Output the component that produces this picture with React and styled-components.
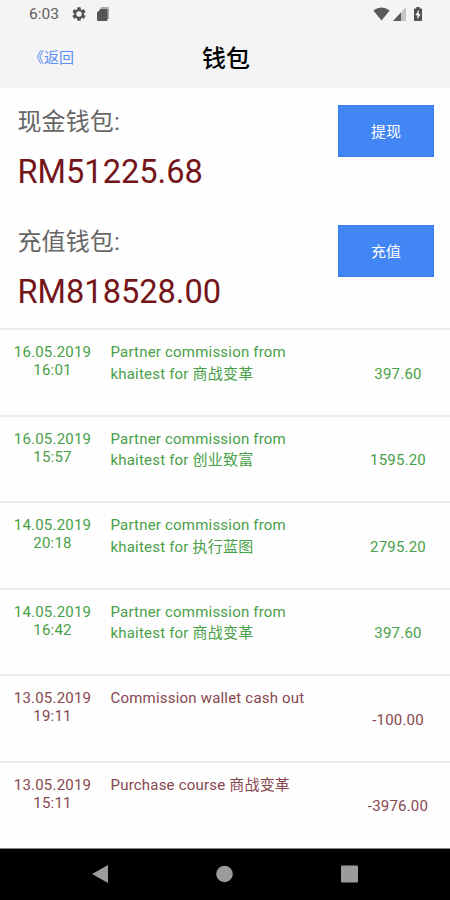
import styled, { createGlobalStyle } from "styled-components";


const wallets = [
    { label: "现金钱包:", balance: "RM51225.68", action: "提现" },
    { label: "充值钱包:", balance: "RM818528.00", action: "充值" },
];

const transactions = [
    { date: "16.05.2019", time: "16:01", text: "Partner commission from khaitest for 商战变革", amount: "397.60" },
    { date: "16.05.2019", time: "15:57", text: "Partner commission from khaitest for 创业致富", amount: "1595.20" },
    { date: "14.05.2019", time: "20:18", text: "Partner commission from khaitest for 执行蓝图", amount: "2795.20" },
    { date: "14.05.2019", time: "16:42", text: "Partner commission from khaitest for 商战变革", amount: "397.60" },
    { date: "13.05.2019", time: "19:11", text: "Commission wallet cash out", amount: "-100.00" },
    { date: "13.05.2019", time: "15:11", text: "Purchase course 商战变革", amount: "-3976.00" },
];

function StatusBar() {
    return (
        <StatusRow>
            <Clock>6:03</Clock>
            <GearIcon width="16" height="16" viewBox="0 0 24 24">
                <path
                    fill="#555"
                    fillRule="evenodd"
                    d="M19.43 12.98c.04-.32.07-.64.07-.98s-.03-.66-.07-.98l2.11-1.65c.19-.15.24-.42.12-.64l-2-3.46c-.12-.22-.39-.3-.61-.22l-2.49 1c-.52-.4-1.08-.73-1.69-.98l-.38-2.65A.488.488 0 0 0 14 2h-4c-.25 0-.46.18-.49.42l-.38 2.65c-.61.25-1.17.59-1.69.98l-2.49-1c-.23-.09-.49 0-.61.22l-2 3.46c-.13.22-.07.49.12.64l2.11 1.65c-.04.32-.07.65-.07.98s.03.66.07.98l-2.11 1.65c-.19.15-.24.42-.12.64l2 3.46c.12.22.39.3.61.22l2.49-1c.52.4 1.08.73 1.69.98l.38 2.65c.03.24.24.42.49.42h4c.25 0 .46-.18.49-.42l.38-2.65c.61-.25 1.17-.59 1.69-.98l2.49 1c.23.09.49 0 .61-.22l2-3.46c.12-.22.07-.49-.12-.64zM12 16a4 4 0 1 1 0-8 4 4 0 0 1 0 8z"
                />
            </GearIcon>
            <CardIcon width="12" height="14" viewBox="0 0 12 14">
                <path d="M4 0h7q1 0 1 1v11h-2V2H3z" fill="#aaa" />
                <path d="M3.6 2H9.5q1 0 1 1v10q0 1-1 1H1q-1 0-1-1V5.6z" fill="#555" />
            </CardIcon>
            <StatusIcons>
                <svg width="17" height="14" viewBox="0 0 17 14">
                    <path d="M0.3 3.6Q8.5-2.8 16.7 3.6L8.5 13.6z" fill="#5b5b5b" />
                </svg>
                <svg width="13" height="14" viewBox="0 0 13 14">
                    <path d="M13 0v14H0z" fill="#c4c4c4" />
                    <path d="M8 5.4V14H0z" fill="#5b5b5b" />
                </svg>
                <BatteryIcon width="8" height="14" viewBox="0 0 8 14">
                    <path d="M2.3 0h3.4v1.4H7q1 0 1 1V13q0 1-1 1H1q-1 0-1-1V2.4q0-1 1-1h1.3z" fill="#505050" />
                    <path d="M4.8 2.8L1.4 8.2h2V12.4L6.7 6.9H4.8z" fill="#f4f4f4" />
                </BatteryIcon>
            </StatusIcons>
        </StatusRow>
    );
}

export default function App() {
    return (
        <Screen>
            <GlobalStyle />

            <Header>
                <StatusBar />
                <TitleBar>
                    <BackLink>《返回</BackLink>
                    <Title>钱包</Title>
                </TitleBar>
            </Header>

            <Wallets>
                {wallets.map((wallet) => (
                    <Wallet key={wallet.label}>
                        <div>
                            <WalletLabel>{wallet.label}</WalletLabel>
                            <Balance>{wallet.balance}</Balance>
                        </div>
                        <ActionButton>{wallet.action}</ActionButton>
                    </Wallet>
                ))}
            </Wallets>

            <TransactionList>
                {transactions.map((item) => (
                    <Transaction key={item.date + item.time} $negative={item.amount.startsWith("-")}>
                        <When>
                            {item.date}
                            <br />
                            {item.time}
                        </When>
                        <Description>{item.text}</Description>
                        <Amount>{item.amount}</Amount>
                    </Transaction>
                ))}
            </TransactionList>

            <NavBar>
                <svg width="16" height="18" viewBox="0 0 16 18">
                    <path d="M16 0v18L0 9z" />
                </svg>
                <svg width="17" height="18" viewBox="0 0 17 18">
                    <circle cx="8.5" cy="9" r="8.3" />
                </svg>
                <svg width="17" height="18" viewBox="0 0 17 18">
                    <rect y="0.5" width="17" height="17" rx="1" />
                </svg>
            </NavBar>
        </Screen>
    );
};

const GlobalStyle = createGlobalStyle`
    body {
        margin: 0;
        background-color: #fefefe;
    }

    * {
        box-sizing: border-box;
    }
`;

const Screen = styled.div`
    display: flex;
    flex-direction: column;
    width: 450px;
    height: 900px;
    overflow: hidden;

    background-color: #fefefe;
    font-family: Roboto, "Noto Sans CJK SC", sans-serif;
`;

const Header = styled.header`
    height: 88px;
    background-color: #f4f4f4;
`;

const StatusRow = styled.div`
    display: flex;
    align-items: center;
    height: 28px;
    padding: 0 28px 0 29px;
`;

const Clock = styled.span`
    width: 42px;
    color: #606060;
    font-size: 15.5px;
`;

const GearIcon = styled.svg`
    margin-right: 10px;
`;

const CardIcon = styled.svg`
    flex: none;
`;

const StatusIcons = styled.div`
    display: flex;
    gap: 3px;
    margin-left: auto;
`;

const BatteryIcon = styled.svg`
    margin-left: 5px;
`;

const TitleBar = styled.div`
    display: grid;
    grid-template-columns: 1fr auto 1fr;
    align-items: center;
    height: 56px;
    padding: 0 27px 0 29px;
`;

const BackLink = styled.a`
    color: #5b8df8;
    font-size: 15px;
    font-weight: 400;
`;

const Title = styled.h1`
    margin: 0;
    color: #000;
    font-size: 24px;
    font-weight: 500;
`;

const Wallets = styled.section`
    height: 240px;
`;

const Wallet = styled.div`
    display: flex;
    justify-content: space-between;
    align-items: flex-start;
    height: 120px;
    padding: 17px 16px 0 17.5px;
`;

const WalletLabel = styled.div`
    height: 34px;
    color: #666;
    font-size: 24px;
    line-height: 34px;
    letter-spacing: 0.1px;
`;

const Balance = styled.div`
    margin-top: 13px;
    color: #74151a;
    font-size: 32.6px;
    line-height: 40px;
`;

const ActionButton = styled.button`
    width: 96px;
    height: 52px;
    padding: 0 0 2px;
    border: 1px solid #3a80f0;

    background-color: #4285f4;
    color: #fff;
    font-family: inherit;
    font-size: 15px;
`;

const TransactionList = styled.section`
    height: 520px;
`;

const Transaction = styled.div`
    display: grid;
    grid-template-columns: 105px 241px 104px;
    height: 86.6px;
    padding-top: 13px;
    border-top: 2px solid #ececec;

    color: ${(props) => (props.$negative ? "#87474f" : "#48a048")};
    font-size: 15px;
    letter-spacing: 0.2px;
`;

const When = styled.div`
    line-height: 18px;
    text-align: center;
`;

const Description = styled.div`
    padding: 0 36px 0 5.5px;
    line-height: 21.5px;
    margin-top: -1px;
`;

const Amount = styled.div`
    padding-top: 20.5px;
    line-height: 21.5px;
    text-align: center;
`;

const NavBar = styled.nav`
    display: flex;
    justify-content: space-between;
    align-items: center;
    height: 52px;
    padding: 0 92px 1px;
    border-top: 1px solid #888;

    background-color: #000;
    fill: #9b9b9b;
`;
